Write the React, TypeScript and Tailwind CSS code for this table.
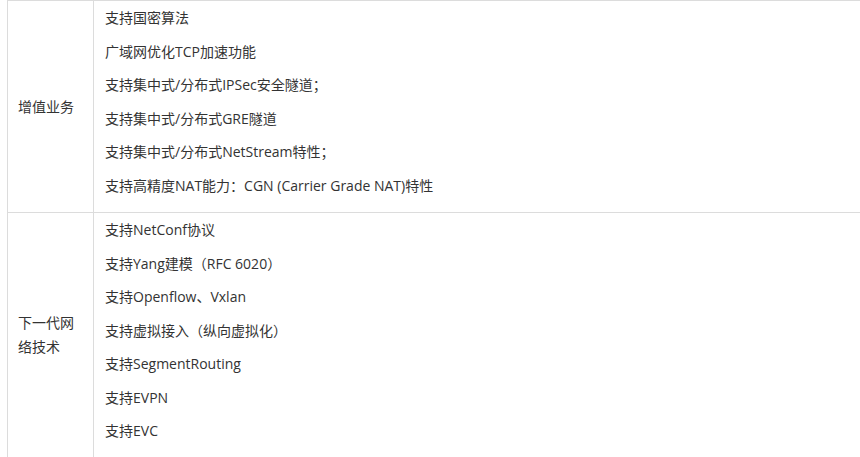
const groups = [
  {
    label: ["增值业务"],
    items: [
      "支持国密算法",
      "广域网优化TCP加速功能",
      "支持集中式/分布式IPSec安全隧道；",
      "支持集中式/分布式GRE隧道",
      "支持集中式/分布式NetStream特性；",
      "支持高精度NAT能力：CGN (Carrier Grade NAT)特性",
    ],
  },
  {
    label: ["下一代网", "络技术"],
    items: [
      "支持NetConf协议",
      "支持Yang建模（RFC 6020）",
      "支持Openflow、Vxlan",
      "支持虚拟接入（纵向虚拟化）",
      "支持SegmentRouting",
      "支持EVPN",
      "支持EVC",
    ],
  },
];

export default function App() {
  return (
    <div className="w-[860px] h-[457px] overflow-hidden bg-white">
      <div
        className="ml-[7px] w-[900px] border-l border-t border-[#dcdcdc] text-[14px] text-[#333]"
        style={{ fontFamily: '"Open Sans", "Noto Sans CJK SC", sans-serif' }}
      >
        {groups.map((g, i) => (
          <div key={i} className="flex border-b border-[#dcdcdc]">
            <div className="w-[86px] shrink-0 flex flex-col justify-center pl-[10px] pr-[8px] leading-[24px] border-r border-[#dcdcdc]">
              {g.label.map((l) => (
                <div key={l}>{l}</div>
              ))}
            </div>
            <div className="flex-1 pl-[11px] pt-[5px] pb-[5px]">
              {g.items.map((t) => (
                <p key={t} className="leading-[23.5px] mb-[10px] whitespace-nowrap">
                  {t}
                </p>
              ))}
            </div>
          </div>
        ))}
      </div>
    </div>
  );
}
